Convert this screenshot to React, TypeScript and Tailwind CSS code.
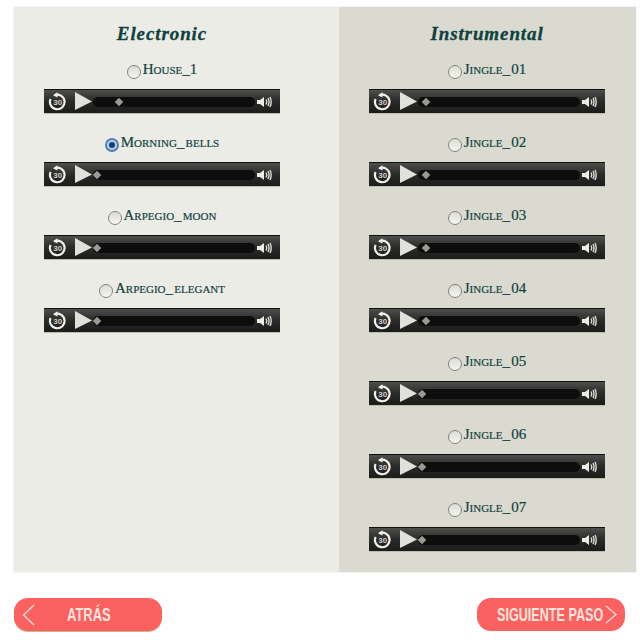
interface Track {
  name: string;
  knob: number;
  checked?: boolean;
}

const electronic: Track[] = [
  { name: "House_1", knob: 75 },
  { name: "Morning_ bells", knob: 53, checked: true },
  { name: "Arpegio_ moon", knob: 53 },
  { name: "Arpegio_ elegant", knob: 53 },
];

const instrumental: Track[] = [
  { name: "Jingle_ 01", knob: 57 },
  { name: "Jingle_ 02", knob: 57 },
  { name: "Jingle_ 03", knob: 57 },
  { name: "Jingle_ 04", knob: 57 },
  { name: "Jingle_ 05", knob: 53 },
  { name: "Jingle_ 06", knob: 53 },
  { name: "Jingle_ 07", knob: 53 },
];

function Replay30() {
  return (
    <svg width="19" height="19" viewBox="0 0 19 19" fill="none" className="shrink-0">
      <path d="M6.5 3.2 A7.3 7.3 0 1 1 2.6 7" stroke="#f0f0ec" strokeWidth="2.2" />
      <path d="M9.5 0.2 L5 3.2 L9.5 5.6 Z" fill="#f0f0ec" />
      <text x="9.7" y="12.8" textAnchor="middle" fontSize="8" fontWeight="700" fill="#d0d0cc" fontFamily="Liberation Sans, sans-serif">
        30
      </text>
    </svg>
  );
}

function Speaker() {
  return (
    <svg width="15" height="12" viewBox="0 0 15 12" fill="none" className="shrink-0">
      <path d="M0 4 H3 L7 1 V11 L3 8 H0 Z" fill="#ecece8" />
      <path d="M9 3.5 Q10.4 6 9 8.5 M11 2 Q13 6 11 10 M13 1 Q15.4 6 13 11" stroke="#dcdcd8" strokeWidth="1.4" />
    </svg>
  );
}

function Player({ knob }: { knob: number }) {
  return (
    <div className="flex h-[24px] w-[236px] shrink-0 items-center border-t border-[#111] bg-gradient-to-b from-[#4e4e4c] via-[#2a2a29] to-[#1c1c1b] pl-[4px] pr-[8px] shadow-[0_1px_0_#bdbcb0]">
      <Replay30 />
      <svg width="18" height="19" viewBox="0 0 18 19" className="ml-[8px] shrink-0">
        <path d="M0 0 L17 9.5 L0 18 Z" fill="#e0e0dc" />
      </svg>
      <div className="relative h-[10px] w-[162px] rounded-full bg-[#0d0d0d]">
        <div
          className="absolute top-[2px] h-[6px] w-[6px] rotate-45 bg-[#9a9a94]"
          style={{ left: knob - 52 }}
        />
      </div>
      <div className="ml-[2px]">
        <Speaker />
      </div>
    </div>
  );
}

function Row({ track }: { track: Track }) {
  return (
    <div className="flex h-[73px] flex-col items-center">
      <div className="mb-[7px] flex h-[24px] items-center justify-center gap-[2px]">
        <span
          className={
            track.checked
              ? "mt-[3px] flex h-[14px] w-[14px] items-center justify-center rounded-full border-2 border-[#4f82b8] bg-[#b9d2ea]"
              : "mt-[3px] h-[14px] w-[14px] rounded-full border-[1.5px] border-[#85837b] bg-gradient-to-b from-[#dcdcd6] to-[#f6f6f2]"
          }
        >
          {track.checked && <span className="h-[6px] w-[6px] rounded-full bg-[#1d3f70]" />}
        </span>
        <span className="mb-[2px] font-['Liberation_Serif',serif] text-[15px] leading-none text-[#124240] [-webkit-text-stroke:0.2px_#124240] [font-variant:small-caps] [word-spacing:-2.5px]">
          {track.name}
        </span>
      </div>
      <Player knob={track.knob} />
    </div>
  );
}

function Column({ title, tracks, className }: { title: string; tracks: Track[]; className: string }) {
  return (
    <section className={`flex flex-col items-center pt-[16px] ${className}`}>
      <h2 className="mb-[13px] h-[22px] font-['Liberation_Serif',serif] text-[19px] font-bold italic leading-[22px] tracking-[0.9px] text-[#0f4140] [-webkit-text-stroke:0.3px_#0f4140]">
        {title}
      </h2>
      {tracks.map((t) => (
        <Row key={t.name} track={t} />
      ))}
    </section>
  );
}

export default function App() {
  return (
    <div className="h-[640px] w-[640px] bg-white pl-[14px] pr-[4px] pt-[7px]">
      <div className="flex h-[565px] w-[622px] shadow-[0_0_2px_#ddd]">
        <Column title="Electronic" tracks={electronic} className="w-[325px] bg-[#ecece6] pr-[29px]" />
        <Column title="Instrumental" tracks={instrumental} className="w-[297px] bg-[#dadad0] pr-[1px]" />
      </div>
      <div className="mt-[26px] flex w-[611px] justify-between font-['Liberation_Sans',sans-serif] text-[18px] font-bold text-[#fde4dc]">
        <button className="flex h-[33px] w-[148px] items-center rounded-[14px] bg-[#fb6160] pl-[8px] shadow-[0_1px_0_#c9b48c]">
          <svg width="13" height="22" viewBox="0 0 13 22" fill="none" className="shrink-0">
            <path d="M12 1 L1.5 11 L12 21" stroke="#fde4dc" strokeWidth="1.3" />
          </svg>
          <span className="ml-[32px] mt-[1px] inline-block w-[60px] origin-left scale-x-[0.72] whitespace-nowrap text-left">ATRÁS</span>
        </button>
        <button className="flex h-[33px] w-[148px] items-center rounded-[14px] bg-[#fb6160] pl-[20px]">
          <span className="mt-[1px] inline-block w-[108px] origin-left scale-x-[0.7] whitespace-nowrap text-left">SIGUIENTE PASO</span>
          <svg width="12" height="19" viewBox="0 0 12 19" fill="none" className="shrink-0">
            <path d="M1 1 L11 9.5 L1 18" stroke="#fde4dc" strokeWidth="1.3" />
          </svg>
        </button>
      </div>
    </div>
  );
}
